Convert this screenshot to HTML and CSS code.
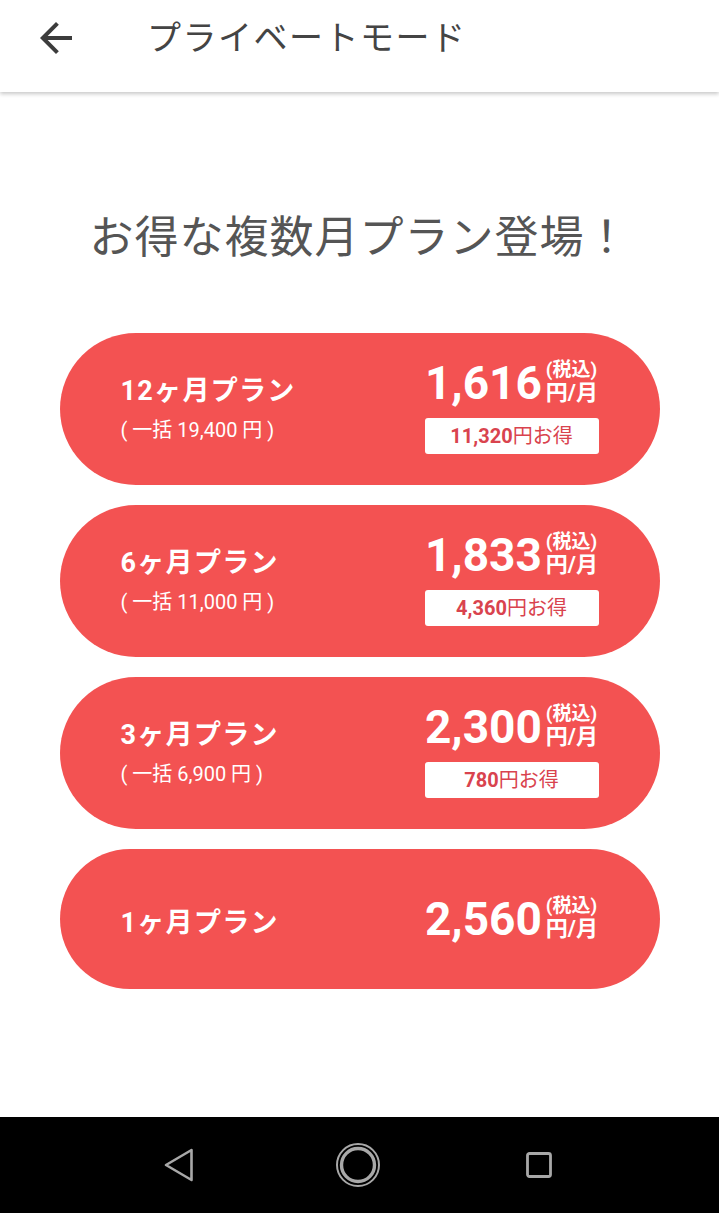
FILE: index.html
```html
<!DOCTYPE html>
<html lang="ja">
<head>
    <meta charset="UTF-8">
    <meta name="viewport" content="width=device-width, initial-scale=1.0">
    <title>プライベートモード</title>
    <link rel="stylesheet" href="styles.css">
</head>
<body>
    <div class="screen">
        <header class="app-bar">
            <svg class="back-icon" viewBox="0 0 24 24" width="48" height="48">
                <path d="M20 11H7.830l5.59-5.59L12 4l-8 8 8 8 1.41-1.41L7.83 13H20v-2z" fill="#3c3c3c"/>
            </svg>
            <h1 class="app-title">プライベートモード</h1>
        </header>

        <main class="content">
            <h2 class="lead">お得な複数月プラン登場！</h2>

            <div class="plan-list">
                <div class="plan">
                    <div class="plan-left">
                        <div class="plan-name">12ヶ月プラン</div>
                        <div class="plan-total">( 一括 19,400 円 )</div>
                    </div>
                    <div class="plan-right">
                        <div class="price-row">
                            <span class="price">1,616</span>
                            <span class="unit">
                                <span class="tax">(税込)</span>
                                <span class="per">円/月</span>
                            </span>
                        </div>
                        <div class="save"><b>11,320</b>円お得</div>
                    </div>
                </div>
                <div class="plan">
                    <div class="plan-left">
                        <div class="plan-name">6ヶ月プラン</div>
                        <div class="plan-total">( 一括 11,000 円 )</div>
                    </div>
                    <div class="plan-right">
                        <div class="price-row">
                            <span class="price">1,833</span>
                            <span class="unit">
                                <span class="tax">(税込)</span>
                                <span class="per">円/月</span>
                            </span>
                        </div>
                        <div class="save"><b>4,360</b>円お得</div>
                    </div>
                </div>
                <div class="plan">
                    <div class="plan-left">
                        <div class="plan-name">3ヶ月プラン</div>
                        <div class="plan-total">( 一括 6,900 円 )</div>
                    </div>
                    <div class="plan-right">
                        <div class="price-row">
                            <span class="price">2,300</span>
                            <span class="unit">
                                <span class="tax">(税込)</span>
                                <span class="per">円/月</span>
                            </span>
                        </div>
                        <div class="save"><b>780</b>円お得</div>
                    </div>
                </div>
                <div class="plan plan-single">
                    <div class="plan-left">
                        <div class="plan-name">1ヶ月プラン</div>
                    </div>
                    <div class="plan-right">
                        <div class="price-row">
                            <span class="price">2,560</span>
                            <span class="unit">
                                <span class="tax">(税込)</span>
                                <span class="per">円/月</span>
                            </span>
                        </div>
                    </div>
                </div>
            </div>
        </main>

        <nav class="nav-bar">
            <svg class="nav-back" viewBox="0 0 34 34" width="34" height="34">
                <path d="M29.5 2 L4 17 L29.5 32 Z" fill="none" stroke="#a8a8a8" stroke-width="2.6" stroke-linejoin="round"/>
            </svg>
            <svg class="nav-home" viewBox="0 0 48 48" width="48" height="48">
                <circle cx="24" cy="24" r="21" fill="none" stroke="#a8a8a8" stroke-width="2"/>
                <circle cx="24" cy="24" r="16.5" fill="none" stroke="#a8a8a8" stroke-width="3.4"/>
            </svg>
            <svg class="nav-recent" viewBox="0 0 30 30" width="30" height="30">
                <rect x="3.5" y="3.5" width="23" height="23" rx="2" fill="none" stroke="#a8a8a8" stroke-width="2.8"/>
            </svg>
        </nav>
    </div>
</body>
</html>
```

FILE: styles.css
```css
body{
    margin: 0;
    font-family: Roboto, "Noto Sans CJK JP", sans-serif;
    background-color: #fff;
}
.screen{
    height: 1213px;
    display: flex;
    flex-direction: column;
}
.app-bar{
    height: 92px;
    display: flex;
    align-items: center;
    padding: 0 0 0 32px;
    box-shadow: 0 2px 4px rgba(0, 0, 0, 0.22);
    position: relative;
    z-index: 2;
    flex-shrink: 0;
}
.back-icon{
    margin-top: -16px;
}
.app-title{
    margin: -22px 0 0 67px;
    font-family: "Noto Sans CJK JP", sans-serif;
    font-size: 34px;
    font-weight: 400;
    color: #444;
    letter-spacing: 1.5px;
}
.content{
    flex: 1;
    display: flex;
    flex-direction: column;
    align-items: center;
}
.lead{
    margin: 116px 0 0 0;
    font-family: "Noto Sans CJK JP", sans-serif;
    font-size: 44px;
    font-weight: 400;
    line-height: 1.2;
    color: #555;
    letter-spacing: 1px;
}
.plan-list{
    margin-top: 72px;
    width: 600px;
    display: flex;
    flex-direction: column;
    gap: 20px;
}
.plan{
    height: 152px;
    box-sizing: border-box;
    background-color: #f35252;
    border-radius: 76px;
    display: flex;
    justify-content: space-between;
    align-items: center;
    padding: 0 60px 0 61px;
    color: #fff;
}
.plan-single{
    height: 140px;
}
.plan-left{
    margin-top: -6px;
}
.plan-name{
    font-family: Roboto, "Noto Sans CJK JP", sans-serif;
    font-size: 27px;
    font-weight: 700;
    letter-spacing: 1.3px;
}
.plan-total{
    margin-top: 6px;
    font-size: 20px;
    font-weight: 400;
}
.plan-single .plan-left{
    margin-top: 4px;
}
.plan-right{
    width: 176px;
    margin-top: -4px;
    display: flex;
    flex-direction: column;
    align-items: center;
}
.plan-single .plan-right{
    margin-top: 0;
}
.price-row{
    display: flex;
    align-items: flex-end;
    gap: 4px;
}
.price{
    font-size: 46px;
    font-weight: 700;
    line-height: 1;
}
.unit{
    display: flex;
    flex-direction: column;
    align-items: flex-start;
    font-weight: 700;
    margin-bottom: 1px;
}
.tax{
    font-size: 19px;
    line-height: 22px;
}
.per{
    font-size: 22px;
    line-height: 24px;
}
.save{
    margin-top: 12px;
    width: 174px;
    height: 36px;
    box-sizing: border-box;
    background-color: #fff;
    border-radius: 3px;
    color: #d9434e;
    font-size: 20px;
    text-align: center;
    line-height: 36px;
}
.save b{
    font-weight: 700;
}
.nav-bar{
    height: 96px;
    flex-shrink: 0;
    background-color: #000;
    display: flex;
    align-items: center;
    padding-left: 162px;
}
.nav-home{
    margin-left: 138px;
}
.nav-recent{
    margin-left: 142px;
}
```
